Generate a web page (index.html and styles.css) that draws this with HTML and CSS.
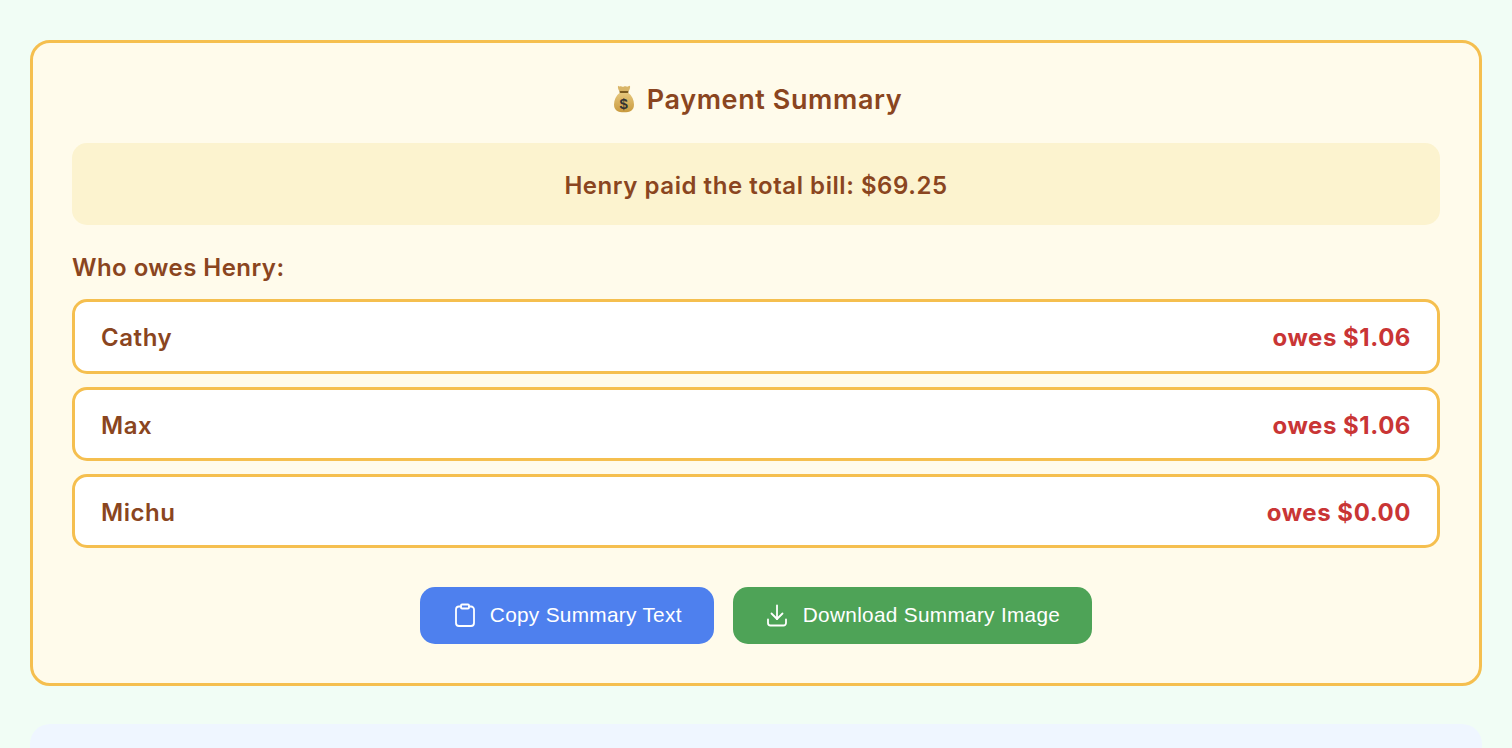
FILE: index.html
```html
<!DOCTYPE html>
<html lang="en">
<head>
  <meta charset="UTF-8">
  <meta name="viewport" content="width=device-width, initial-scale=1.0">
  <title>Payment Summary</title>
  <link rel="stylesheet" href="styles.css">
</head>
<body>
  <section class="summary">
    <h2 class="summary-title">
      <svg class="bag" viewBox="0 0 24 28" width="24" height="28" aria-hidden="true">
        <defs>
          <linearGradient id="bagFill" x1="0" y1="0" x2="0" y2="1">
            <stop offset="0" stop-color="#e6c77c"/>
            <stop offset="1" stop-color="#c99a3e"/>
          </linearGradient>
        </defs>
        <path d="M6 .8c1.500 1.200 2.500.2 3.500.6 1 .5 1.800.5 2.500.1.800-.4 1.500-.1 2.500.1 1.200.2 2-.2 3.500-.8.5 2-.6 4.500-1.800 6.200H7.800C6.600 5.300 5.500 2.800 6 .8z" fill="#d9b567"/>
        <path d="M8 7.500C4 10.500 2 15 2 19.500c0 6 4 7.800 10 7.800s10-1.800 10-7.800C22 15 20 10.500 16 7.500z" fill="url(#bagFill)"/>
        <rect x="7.500" y="6" width="9" height="2" rx="1" fill="#7a5a20"/>
        <text x="12" y="24" text-anchor="middle" class="bag-sign">$</text>
      </svg>
      Payment Summary
    </h2>

    <div class="total">Henry paid the total bill: $69.25</div>

    <h3 class="owes-title">Who owes Henry:</h3>

    <div class="owes-list">
      <div class="owes-row">
        <span>Cathy</span>
        <span class="amount">owes $1.06</span>
      </div>
      <div class="owes-row">
        <span>Max</span>
        <span class="amount">owes $1.06</span>
      </div>
      <div class="owes-row">
        <span>Michu</span>
        <span class="amount">owes $0.00</span>
      </div>
    </div>

    <div class="actions">
      <button class="btn btn-blue">
        <svg viewBox="0 0 24 24" width="24" height="24" fill="none" stroke="currentColor" stroke-width="1.800" stroke-linecap="round" stroke-linejoin="round" aria-hidden="true">
          <rect x="9" y="1.500" width="8" height="4" rx="1"/>
          <path d="M9 3.500H7a3 3 0 0 0-3 3V20a3 3 0 0 0 3 3h12a3 3 0 0 0 3-3V6.500a3 3 0 0 0-3-3h-2"/>
        </svg>
        Copy Summary Text
      </button>
      <button class="btn btn-green">
        <svg viewBox="0 0 24 24" width="24" height="24" fill="none" stroke="currentColor" stroke-width="1.800" stroke-linecap="round" stroke-linejoin="round" aria-hidden="true">
          <path d="M3 16.500V20a2.500 2.500 0 0 0 2.500 2.500h13A2.500 2.500 0 0 0 21 20v-3.500"/>
          <path d="M6.500 10.500l5.500 5.500 5.500-5.500"/>
          <path d="M12 16V2.500"/>
        </svg>
        Download Summary Image
      </button>
    </div>
  </section>

  <section class="next-panel"></section>
</body>
</html>
```

FILE: styles.css
```css
html {
  height: 100%;
  overflow: hidden;
}
body {
  margin: 0;
  padding: 40px 30px 0;
  height: 100%;
  box-sizing: border-box;
  background: #f1fdf5;
  font-family: 'Inter', sans-serif;
  color: #8a4520;
  overflow: hidden;
}
.summary {
  background: #fffbeb;
  border: 3px solid #f5bf4f;
  border-radius: 20px;
  padding: 39px;
  box-sizing: border-box;
  height: 646px;
}
.summary-title {
  margin: 0 0 26px;
  padding: 1px 0 0 2px;
  display: flex;
  justify-content: center;
  align-items: center;
  gap: 11px;
  font-size: 27px;
  letter-spacing: 0.6px;
  line-height: 34px;
  font-weight: 600;
}
.bag {
  margin-top: -2px;
}
.bag-sign {
  font-family: 'Liberation Sans', sans-serif;
  font-size: 15px;
  font-weight: 700;
  fill: #333;
}
.total {
  background: #fcf3cf;
  border-radius: 15px;
  height: 82px;
  padding-top: 2px;
  box-sizing: border-box;
  display: flex;
  align-items: center;
  justify-content: center;
  font-size: 24px;
  letter-spacing: 0.55px;
  font-weight: 600;
}
.owes-title {
  margin: 27px 0 15.3px;
  font-size: 24px;
  letter-spacing: 0.45px;
  line-height: 32px;
  font-weight: 600;
}
.owes-list {
  display: flex;
  flex-direction: column;
  gap: 13px;
}
.owes-row {
  background: #fff;
  border: 3px solid #f5bf4f;
  border-radius: 15px;
  height: 74.33px;
  box-sizing: border-box;
  padding: 3px 26px 0;
  display: flex;
  justify-content: space-between;
  align-items: center;
  font-size: 24px;
  letter-spacing: 0.55px;
  font-weight: 600;
}
.amount {
  color: #c93535;
  font-weight: 700;
}
.actions {
  margin-top: 38.7px;
  display: flex;
  justify-content: center;
  gap: 19px;
}
.btn {
  height: 57px;
  padding: 0 32px;
  border: none;
  border-radius: 15px;
  color: #fff;
  font-family: 'Liberation Sans', sans-serif;
  font-size: 20.8px;
  letter-spacing: 0.3px;
  display: flex;
  align-items: center;
  gap: 14px;
  cursor: pointer;
}
.btn-blue {
  background: #4e80ee;
}
.btn-green {
  background: #4ea357;
}
.next-panel {
  margin-top: 38px;
  height: 60px;
  background: #eff6ff;
  border-radius: 20px;
}
```
